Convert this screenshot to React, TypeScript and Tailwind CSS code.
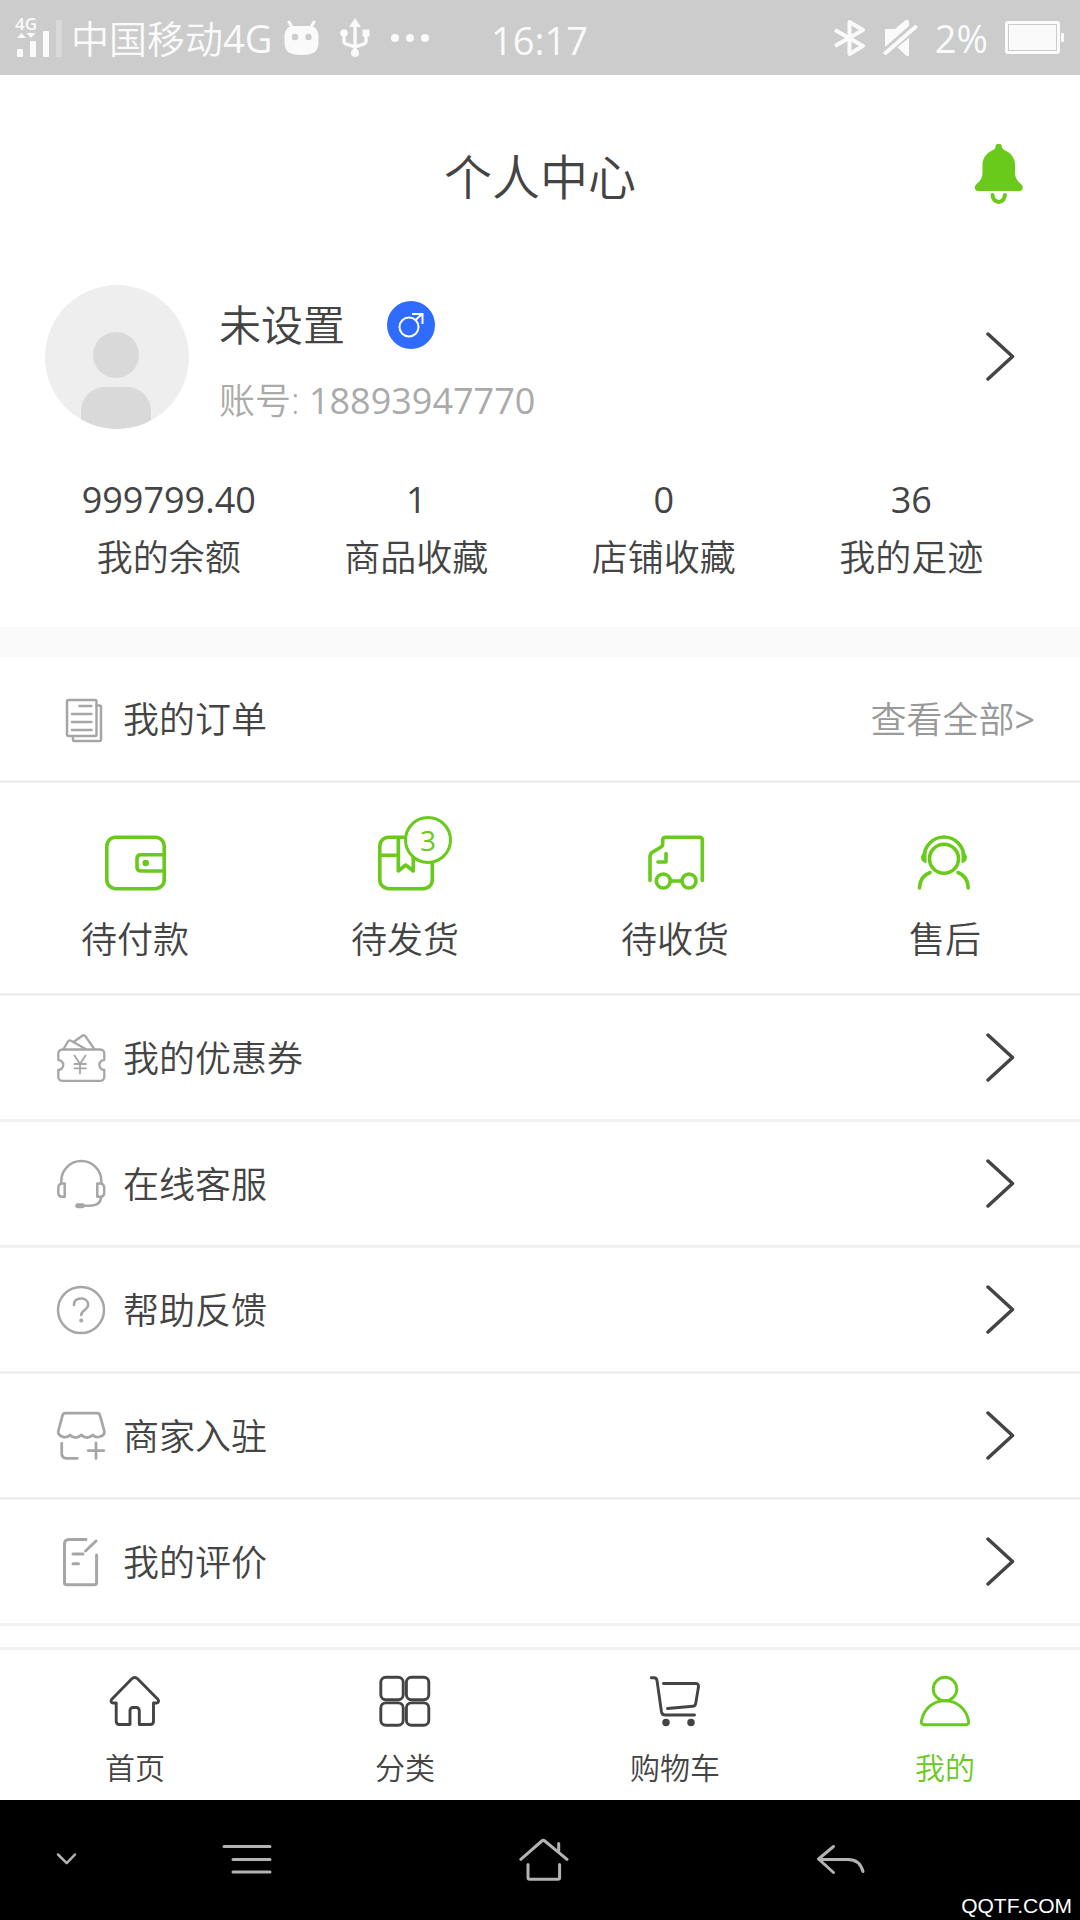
import React from "react";

// ---------- 状态栏图标 ----------

function SignalIcon() {
  return (
    <svg width="48" height="54" viewBox="0 -6 48 54" fill="currentColor">
      <text x="0" y="13" fontSize="17" fontWeight="600">
        4G
      </text>
      <path d="M2 21l4.500-5 4.500 5zM11.500 16h9l-4.500 5z" />
      <rect x="2" y="32" width="6" height="8" rx="1" />
      <rect x="15" y="24" width="6" height="16" rx="1" />
      <rect x="28" y="14" width="6" height="26" rx="1" />
      <rect x="41" y="3" width="6" height="37" rx="1" opacity="0.3" />
    </svg>
  );
}

function RobotIcon() {
  return (
    <svg width="36" height="36" viewBox="0 0 36 36">
      <path d="M5 2l4 7M30 2l-4 7" stroke="currentColor" strokeWidth="3" strokeLinecap="round" />
      <path
        d="M10 6h15c6 0 9.500 4 9.500 10v6c0 9-4 13-17 13S.5 31 .5 22v-6C.5 10 4 6 10 6z"
        fill="currentColor"
      />
      <circle cx="11" cy="17" r="3.200" fill="#ccc" />
      <circle cx="24.500" cy="17" r="3.200" fill="#ccc" />
    </svg>
  );
}

function UsbIcon() {
  return (
    <svg width="30" height="40" viewBox="0 0 30 40" fill="currentColor">
      <path d="M15 0l6 9H9z" />
      <path
        d="M15 6v28M4 15v8q0 2 2 2.800l9 3.200 9-3.200q2-.8 2-2.800v-8"
        fill="none"
        stroke="currentColor"
        strokeWidth="3.400"
      />
      <circle cx="4" cy="15" r="3.800" />
      <rect x="22.500" y="11.500" width="7" height="7" />
      <circle cx="15" cy="35" r="4" />
    </svg>
  );
}

function DotsIcon() {
  return (
    <svg width="40" height="10" viewBox="0 0 40 10" fill="currentColor">
      <circle cx="5" cy="5" r="4" />
      <circle cx="20" cy="5" r="4" />
      <circle cx="35" cy="5" r="4" />
    </svg>
  );
}

function BluetoothIcon() {
  return (
    <svg width="32" height="40" viewBox="0 0 32 40" fill="none" stroke="currentColor" strokeWidth="4">
      <path d="M1 12l28 16-13.500 8V4L29 12 1 28" strokeLinejoin="round" />
    </svg>
  );
}

function MuteIcon() {
  return (
    <svg width="35" height="38" viewBox="0 0 35 38">
      <path d="M2 10h10L22 1.500q4-2 4 1.500v4L2 28z" fill="currentColor" />
      <path d="M26 19v17q0 2-3 .5L14 28z" fill="currentColor" />
      <path d="M2.500 34L32.500 8" stroke="#ccc" strokeWidth="7" />
      <path d="M2.500 34L32.500 8" stroke="currentColor" strokeWidth="4" strokeLinecap="round" />
    </svg>
  );
}

function BatteryIcon() {
  return (
    <svg width="59" height="34" viewBox="0 0 59 34">
      <rect x="1.500" y="1.500" width="52" height="30" rx="1.500" fill="none" stroke="currentColor" strokeWidth="3" />
      <rect x="4" y="4" width="47" height="25" fill="currentColor" />
      <rect x="56" y="12" width="3" height="9" rx="1" fill="currentColor" />
    </svg>
  );
}

// ---------- 页面图标 ----------

function BellIcon() {
  return (
    <svg width="49" height="60" viewBox="0 0 49 60" className="text-[#69ca1c]">
      <path
        d="M21.500 3a3.200 3.200 0 0 1 6.500 0c.3 1.500.8 2 2 2.700 6.500 2.800 11 8 11 14.800v8c0 6 3 9 6.500 12 2.500 2.500 1 6.500-2 6.500H4c-3 0-4.500-4-2-6.500 3.500-3 6.500-6 6.500-12v-8c0-6.800 4.500-12 11-14.800 1.200-.7 1.700-1.200 2-2.700z"
        fill="currentColor"
      />
      <path
        d="M18.500 51a6.200 7 0 0 0 12.400 0"
        fill="none"
        stroke="currentColor"
        strokeWidth="4"
        strokeLinecap="round"
      />
    </svg>
  );
}

function Avatar() {
  return (
    <span className="h-36 w-36 shrink-0 overflow-hidden rounded-full bg-[#eee]">
      <svg width="144" height="144" viewBox="0 0 144 144" fill="#d9d9d9">
        <circle cx="71" cy="70" r="23" />
        <path d="M36 144v-18a24 24 0 0 1 24-24h22a24 24 0 0 1 24 24v18z" />
      </svg>
    </span>
  );
}

function MaleIcon() {
  return (
    <span className="h-12 w-12 rounded-full bg-[#2f6bff]">
      <svg width="48" height="48" viewBox="0 0 48 48" fill="none" stroke="#fff" strokeWidth="2">
        <circle cx="22" cy="26" r="9.500" />
        <path d="M28.500 19L35 13M25 13h10.500v10" />
      </svg>
    </span>
  );
}

function Chevron() {
  return (
    <svg
      width="30"
      height="50"
      viewBox="0 0 30 50"
      fill="none"
      stroke="#444"
      strokeWidth="3.500"
      strokeLinecap="round"
      strokeLinejoin="round"
    >
      <path d="M2 2L26.500 24.500 2 47" />
    </svg>
  );
}

function GrayIcon({ children, width = 2.5 }: { children: React.ReactNode; width?: number }) {
  return (
    <svg
      width="48"
      height="48"
      viewBox="0 0 48 48"
      fill="none"
      stroke="#a6a6a6"
      strokeWidth={width}
      strokeLinecap="round"
      strokeLinejoin="round"
      className="shrink-0 overflow-visible"
    >
      {children}
    </svg>
  );
}

function OrderIcon() {
  return (
    <GrayIcon>
      <rect x="10" y="5" width="29.500" height="36" rx="1.500" />
      <path d="M39.500 10.500h3q1.500 0 1.500 1.500v32.500q0 1.500-1.500 1.500h-25q-1.500 0-1.500-1.500V41" />
      <path d="M22.500 11H34.500M15 19h19.500M15 27h19.500M15 35h19.500" />
    </GrayIcon>
  );
}

function CouponIcon() {
  return (
    <GrayIcon width={2.3}>
      <path d="M5.300 15.500h38a4 4 0 0 1 4 4V26c-2.500 0-5 2.200-5 5s2.500 5 5 5v6.800a4 4 0 0 1-4 4h-38a4 4 0 0 1-4-4V36c2.500 0 5-2.200 5-5s-2.500-5-5-5v-6.500a4 4 0 0 1 4-4z" />
      <path d="M6.500 15L11 7.500q1-1.700 3-.7L28.500 15M17.300 7.500l8-5.800q1.700-1.200 3 .5L37.300 15" />
      <path d="M17.500 21.500l5.500 8.500 5.500-8.500M23 30v9.500M17.500 30h11.500M17.500 34.300h11.500" strokeWidth="1.800" />
    </GrayIcon>
  );
}

function ServiceIcon() {
  return (
    <GrayIcon>
      <path d="M4.300 22.500V21a20 20 0 0 1 40 0v1.500" />
      <path d="M7.700 23.500H5q-3.700.5-3.700 4.500v4.500q0 4.300 4 4.300h2.400zM40.300 23.500H43.500q3.700.5 3.700 4.500v4.500q0 4.300-4 4.300h-2.900z" />
      <path d="M27 45.700h5c7 0 12-2.500 12-8.700" />
      <rect x="19.500" y="44.500" width="7" height="2.500" rx="1" fill="#a6a6a6" />
    </GrayIcon>
  );
}

function HelpIcon() {
  return (
    <GrayIcon>
      <circle cx="24" cy="24" r="23" />
      <path d="M17 19c0-4.500 3-6.500 7.200-6.500s7 2.700 7 6.300c0 5-7 5.200-7 10.200" />
      <circle cx="24.200" cy="34.500" r=".8" fill="#a6a6a6" />
    </GrayIcon>
  );
}

function ShopIcon() {
  return (
    <GrayIcon width={2.8}>
      <path d="M8.500 1.200H40q2.500 0 3 2.300L47.300 19c1 5-7.500 8.500-11.600 4-3.300 3.400-8 3.400-11.400 0-3.300 3.400-8 3.400-11.300 0-4 4.500-12.700 1-11.700-4L5.500 3.500q.6-2.300 3-2.300z" />
      <path d="M4.700 31.300v10q0 5 5 5h10.600M39 31v15.500M31.300 38.700h15.500" />
    </GrayIcon>
  );
}

function ReviewIcon() {
  return (
    <GrayIcon width={3}>
      <path d="M29 1.500H12q-4.500 0-4.500 4.500v38.500q0 2.300 2.300 2.300h27.500q2.300 0 2.300-2.300V17" />
      <path d="M39 3L28.500 13M16 16h10M16 25.700h5.500" />
    </GrayIcon>
  );
}

function GreenIcon({ children }: { children: React.ReactNode }) {
  return (
    <svg
      width="72"
      height="60"
      viewBox="0 0 72 60"
      fill="none"
      stroke="#69ca1c"
      strokeWidth="3.600"
      strokeLinecap="round"
      strokeLinejoin="round"
    >
      {children}
    </svg>
  );
}

function WalletIcon() {
  return (
    <GreenIcon>
      <rect x="7.800" y="4.200" width="57.400" height="51.500" rx="9" />
      <path d="M65 21.700H42q-4 0-4 4V34q0 4 4 4h23" />
      <circle cx="46.700" cy="30" r="1.500" fill="#69ca1c" />
    </GreenIcon>
  );
}

function PackageIcon() {
  return (
    <GreenIcon>
      <rect x="10.800" y="4.200" width="52.500" height="51.500" rx="9" />
      <path d="M10.800 22.300h18.500M29.300 4.500V38l7.400-6 7.600 6V4.500" />
    </GreenIcon>
  );
}

function TruckIcon() {
  return (
    <GreenIcon>
      <path d="M11 47.500V23q0-2.200 2-3.500l9-5.500q1.700-1 1.700-3V7q0-2.800 2.800-2.800h34q2.800 0 2.800 2.800v40.500" />
      <path d="M27 20.500V29h-8M31.500 48h11" />
      <circle cx="24.300" cy="48" r="7" />
      <circle cx="50" cy="48" r="7" />
    </GreenIcon>
  );
}

function AgentIcon() {
  return (
    <GreenIcon>
      <circle cx="35" cy="25.700" r="14.500" />
      <path d="M15 24.500a20 20.500 0 0 1 40 0" />
      <path
        d="M17.500 19v11c-3 0-5.500-2.500-5.500-5.500s2.500-5 5.500-5.500zM52.500 19v11c3 0 5.500-2.500 5.500-5.500s-2.500-5-5.500-5.500z"
        fill="#69ca1c"
        stroke="none"
      />
      <path d="M21 39.500C14 42 10.700 48 10.500 55M49 39.500c7 2.500 10 8.500 10.200 15.500" />
    </GreenIcon>
  );
}

function TabIcon({ children }: { children: React.ReactNode }) {
  return (
    <svg
      width="50"
      height="50"
      viewBox="0 0 50 50"
      fill="none"
      stroke="currentColor"
      strokeWidth="2.900"
      strokeLinecap="round"
      strokeLinejoin="round"
      className="overflow-visible"
    >
      {children}
    </svg>
  );
}

function HomeIcon() {
  return (
    <TabIcon>
      <path d="M21.600 3q3.100-2.800 6.200 0l20 20.200c1.600 1.600.6 3.800-1.400 3.800h-2.900v18.500a3 3 0 0 1-3 3H29.300v-14a3 3 0 0 0-3-3H23a3 3 0 0 0-3 3v14H9.200a3 3 0 0 1-3-3V27h-3c-2 0-3-2.200-1.400-3.800z" />
    </TabIcon>
  );
}

function CategoryIcon() {
  return (
    <TabIcon>
      <rect x=".8" y="1.300" width="22.400" height="22.400" rx="5" />
      <rect x="26.400" y="1.300" width="22.400" height="22.400" rx="5" />
      <rect x=".8" y="26.900" width="22.400" height="22.400" rx="5" />
      <rect x="26.400" y="26.900" width="22.400" height="22.400" rx="5" />
    </TabIcon>
  );
}

function CartIcon() {
  return (
    <TabIcon>
      <path d="M1.300 1.800h2.700q2.500 0 3 2.700l4.500 31.500q.5 3 3.500 3h29.500" />
      <path d="M13.500 7.500h32q3.300 0 3 3.300L45.700 27.500q-.5 2.700-3 2.800L17.500 32.500" />
      <circle cx="16" cy="46.500" r="2.300" fill="currentColor" />
      <circle cx="41" cy="46.500" r="2.300" fill="currentColor" />
    </TabIcon>
  );
}

function MeIcon() {
  return (
    <TabIcon>
      <circle cx="25" cy="13" r="11.800" />
      <path d="M4 48.700h42c2 0 3-1.500 2.700-3.300C46.500 33 37 24.800 25 24.800S3.500 33 1.300 45.400C1 47.200 2 48.700 4 48.700z" />
    </TabIcon>
  );
}

function NavIcon({ children }: { children: React.ReactNode }) {
  return (
    <svg
      width="50"
      height="50"
      viewBox="0 0 50 50"
      fill="none"
      stroke="#b3b3b3"
      strokeWidth="3"
      strokeLinecap="round"
      strokeLinejoin="round"
    >
      {children}
    </svg>
  );
}

// ---------- 数据 ----------

const stats = [
  { value: "999799.40", label: "我的余额" },
  { value: "1", label: "商品收藏" },
  { value: "0", label: "店铺收藏" },
  { value: "36", label: "我的足迹" },
];

const orderStates = [
  { label: "待付款", icon: <WalletIcon /> },
  { label: "待发货", icon: <PackageIcon />, count: 3 },
  { label: "待收货", icon: <TruckIcon /> },
  { label: "售后", icon: <AgentIcon /> },
];

const menu = [
  { label: "我的优惠券", icon: <CouponIcon /> },
  { label: "在线客服", icon: <ServiceIcon /> },
  { label: "帮助反馈", icon: <HelpIcon /> },
  { label: "商家入驻", icon: <ShopIcon /> },
  { label: "我的评价", icon: <ReviewIcon /> },
];

const tabs = [
  { label: "首页", icon: <HomeIcon />, active: false },
  { label: "分类", icon: <CategoryIcon />, active: false },
  { label: "购物车", icon: <CartIcon />, active: false },
  { label: "我的", icon: <MeIcon />, active: true },
];

// ---------- 页面 ----------

function StatusBar() {
  return (
    <div className="flex h-[75px] items-center bg-[#ccc] pr-4 pl-[15px] text-[38px] leading-[50px] text-[#fafafa]">
      <div className="flex flex-1 items-center gap-2">
        <SignalIcon />
        <span className="whitespace-nowrap">
          中国移动<span className="font-normal">4G</span>
        </span>
        <div className="flex items-center gap-5 pl-1">
          <RobotIcon />
          <UsbIcon />
          <DotsIcon />
        </div>
      </div>
      <time className="pt-1 font-normal">16:17</time>
      <div className="flex flex-1 items-center justify-end gap-[17px]">
        <BluetoothIcon />
        <MuteIcon />
        <span className="font-normal">2%</span>
        <BatteryIcon />
      </div>
    </div>
  );
}

function Profile() {
  return (
    <section className="pt-1.5 pb-10">
      <a href="#profile" className="flex items-center pr-16 pl-[45px]">
        <Avatar />
        <div className="ml-[30px] flex-1 pt-3 leading-14">
          <div className="flex items-center gap-[42px]">
            <span className="text-[42px] leading-14">未设置</span>
            <MaleIcon />
          </div>
          <p className="mt-5 text-4xl leading-14 text-[#aaa]">
            账号: <span className="font-normal">18893947770</span>
          </p>
        </div>
        <Chevron />
      </a>
      <ul className="mt-[42px] grid grid-cols-4 px-[45px] text-center text-4xl leading-[58px]">
        {stats.map((s) => (
          <li key={s.label}>
            <p className="font-normal">{s.value}</p>
            <p>{s.label}</p>
          </li>
        ))}
      </ul>
    </section>
  );
}

function Orders() {
  return (
    <section className="text-4xl">
      <div className="flex h-[126px] items-center gap-[18px] border-b-3 border-[#f0f0f0] pr-[45px] pl-[57px]">
        <OrderIcon />
        <h2 className="flex-1 pt-0.5">我的订单</h2>
        <a href="#orders" className="pt-0.5 text-[#999]">
          查看全部<span className="font-normal">&gt;</span>
        </a>
      </div>
      <div className="grid grid-cols-4 border-b-3 border-[#f0f0f0] pt-[50px] pb-[26px]">
        {orderStates.map((o) => (
          <button key={o.label} className="flex flex-col items-center gap-5">
            <span className="relative">
              {o.icon}
              {o.count && (
                <span className="absolute -top-[17px] left-[35px] flex h-12 w-12 items-center justify-center rounded-full border-3 border-[#69ca1c] bg-white text-[28px] leading-none font-normal text-[#69ca1c]">
                  {o.count}
                </span>
              )}
            </span>
            <span className="leading-[54px]">{o.label}</span>
          </button>
        ))}
      </div>
    </section>
  );
}

function TabBar() {
  return (
    <nav className="grid grid-cols-4 border-t-3 border-[#f0f0f0] bg-white pt-[26px] pb-2.5">
      {tabs.map((t) => (
        <a
          key={t.label}
          href="#tab"
          className={`flex flex-col items-center gap-5 ${t.active ? "text-[#69ca1c]" : ""}`}
        >
          {t.icon}
          <span className="text-[30px] leading-[44px]">{t.label}</span>
        </a>
      ))}
    </nav>
  );
}

function SystemNav() {
  return (
    <div className="relative grid h-[120px] grid-cols-[66px_1fr_1fr_1fr] items-center justify-items-center bg-black pr-[91px] pl-[33px]">
      <button aria-label="收起">
        <NavIcon>
          <path d="M17 19.500l8.700 8.700 8.300-8.700" strokeWidth="2.500" />
        </NavIcon>
      </button>
      <button aria-label="菜单">
        <NavIcon>
          <path d="M2 11.500h46M11 24.500h37M11 37h37" />
        </NavIcon>
      </button>
      <button aria-label="主页">
        <NavIcon>
          <path d="M1.800 24.300L22.800 6q1.500-1.200 3 0L48 24.300M39.700 8.500v8" />
          <path d="M9 29.500v13q0 1.800 1.800 1.800h28q1.800 0 1.800-1.800v-13" />
        </NavIcon>
      </button>
      <button aria-label="返回">
        <NavIcon>
          <path d="M17.500 11.500L2.500 24l15 13.500M3 24.500h29c8 0 13 4.500 15 12" />
        </NavIcon>
      </button>
      <span className="absolute right-2 bottom-0 font-['Liberation_Sans',sans-serif] text-[21px] leading-7 text-white">
        QQTF.COM
      </span>
    </div>
  );
}

export default function App() {
  return (
    <div className="flex min-h-screen flex-col bg-white font-['Open_Sans','Noto_Sans_CJK_SC',sans-serif] font-[350] text-[#444]">
      <StatusBar />
      <header className="grid h-[204px] grid-cols-[1fr_auto_1fr] items-center pr-[57px] pl-[57px]">
        <h1 className="col-start-2 text-5xl font-[350]">个人中心</h1>
        <button aria-label="消息" className="justify-self-end pb-1.5">
          <BellIcon />
        </button>
      </header>
      <main className="flex-1">
        <Profile />
        <div className="h-[30px] bg-[#fafafa]" />
        <Orders />
        <ul className="text-4xl">
          {menu.map((m) => (
            <li key={m.label} className="border-b-3 border-[#f0f0f0]">
              <a href="#menu" className="flex h-[123px] items-center gap-[18px] pr-16 pl-[57px]">
                {m.icon}
                <span className="flex-1 pt-0.5">{m.label}</span>
                <Chevron />
              </a>
            </li>
          ))}
        </ul>
      </main>
      <TabBar />
      <SystemNav />
    </div>
  );
}
